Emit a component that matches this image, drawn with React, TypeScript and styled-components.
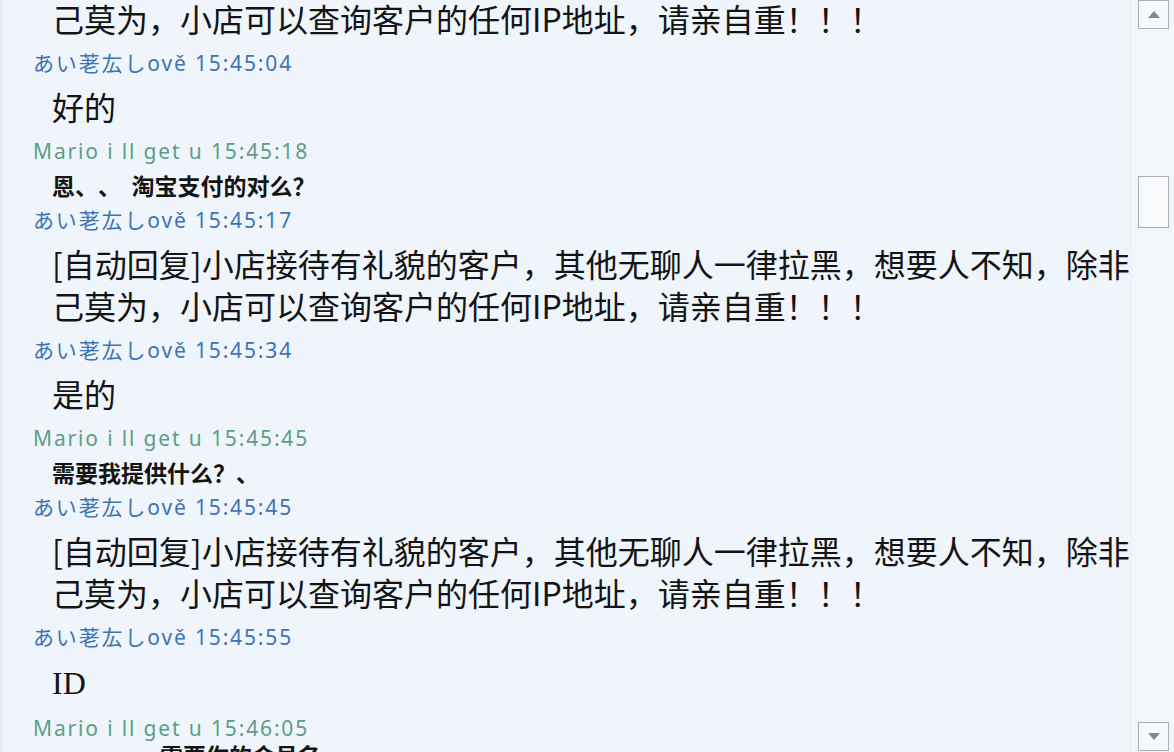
import React from "react";
import styled, { createGlobalStyle } from "styled-components";

const Global = createGlobalStyle`
  html, body { margin: 0; padding: 0; background: #eff5fb; }
  #root { width: 1174px; height: 752px; overflow: hidden; }
`;

const Window = styled.div`
  display: flex;
  width: 1174px;
  height: 752px;
  overflow: hidden;
  background: #eff5fb;
  border-left: 3px solid #e2ecf6;
  box-sizing: border-box;
`;

const Log = styled.div`
  flex: 1;
  overflow: hidden;
  padding-left: 30px;
`;

const LogInner = styled.div`
  margin-top: -45px;
`;

const NameLine = styled.div<{ $who: "me" | "buyer" }>`
  font-family: "Noto Sans", "Noto Sans CJK JP", sans-serif;
  font-size: 21px;
  letter-spacing: 1.85px;
  line-height: 44px;
  height: 44px;
  white-space: nowrap;
  color: ${(p) => (p.$who === "me" ? "#3d74b4" : "#5e9d87")};
`;

const Message = styled.div<{ $size: "big" | "small"; $indent?: number; $pull?: number }>`
  margin-left: ${(p) => 19 + (p.$indent ?? 0)}px;
  margin-top: ${(p) => -(p.$pull ?? 0)}px;
  font-family: "Noto Sans CJK SC", "Noto Sans", sans-serif;
  color: #141414;
  white-space: pre;
  text-spacing-trim: space-all;
  font-size: ${(p) => (p.$size === "big" ? "32px" : "23px")};
  line-height: ${(p) => (p.$size === "big" ? "42px" : "25px")};
  font-weight: ${(p) => (p.$size === "big" ? 400 : 700)};
  margin-bottom: ${(p) => (p.$size === "big" ? "2px" : "0")};
`;

const IdText = styled.span`
  font-family: "Liberation Serif", serif;
`;

const Scrollbar = styled.div`
  width: 44px;
  display: flex;
  flex-direction: column;
  align-items: flex-start;
  padding: 0 0 1px 7px;
  box-sizing: border-box;
  background: #f1f6fa;
  border-left: 1px solid #e8eef5;
`;

const ScrollButton = styled.div`
  width: 31px;
  height: 29px;
  box-sizing: border-box;
  border: 1px solid #a8adb3;
  background: #f7f9fb;
  display: flex;
  align-items: center;
  justify-content: center;
  flex-shrink: 0;
`;

const Track = styled.div`
  flex: 1;
  display: flex;
  flex-direction: column;
`;

const Thumb = styled.div`
  width: 31px;
  height: 52px;
  box-sizing: border-box;
  border: 1px solid #a8adb3;
  background: #f8fafc;
`;

const Arrow = ({ up }: { up: boolean }) => (
  <svg width="12" height="7" viewBox="0 0 12 7">
    <polygon points={up ? "6,0 12,7 0,7" : "0,0 12,0 6,7"} fill="#7d8893" />
  </svg>
);

const AUTO1 = "[自动回复]小店接待有礼貌的客户，其他无聊人一律拉黑，想要人不知，除非";
const AUTO2 = "己莫为，小店可以查询客户的任何IP地址，请亲自重！！！";
const ME = "あい荖厷しově";
const BUYER = "Mario i ll get u";

export default function App() {
  return (
    <>
      <Global />
      <Window>
        <Log>
          <LogInner>
            <Message $size="big">
              {AUTO1}
              <br />
              {AUTO2}
            </Message>
            <NameLine $who="me">{ME} 15:45:04</NameLine>
            <Message $size="big">好的</Message>
            <NameLine $who="buyer">{BUYER} 15:45:18</NameLine>
            <Message $size="small">恩、、  淘宝支付的对么？</Message>
            <NameLine $who="me">{ME} 15:45:17</NameLine>
            <Message $size="big">
              {AUTO1}
              <br />
              {AUTO2}
            </Message>
            <NameLine $who="me">{ME} 15:45:34</NameLine>
            <Message $size="big">是的</Message>
            <NameLine $who="buyer">{BUYER} 15:45:45</NameLine>
            <Message $size="small">需要我提供什么？、</Message>
            <NameLine $who="me">{ME} 15:45:45</NameLine>
            <Message $size="big">
              {AUTO1}
              <br />
              {AUTO2}
            </Message>
            <NameLine $who="me">{ME} 15:45:55</NameLine>
            <Message $size="big">
              <IdText>ID</IdText>
            </Message>
            <NameLine $who="buyer">{BUYER} 15:46:05</NameLine>
            <Message $size="small" $indent={108} $pull={7}>
              需要你的会员名
            </Message>
          </LogInner>
        </Log>
        <Scrollbar>
          <ScrollButton>
            <Arrow up />
          </ScrollButton>
          <Track>
            <div style={{ height: 147 }} />
            <Thumb />
          </Track>
          <ScrollButton>
            <Arrow up={false} />
          </ScrollButton>
        </Scrollbar>
      </Window>
    </>
  );
}
